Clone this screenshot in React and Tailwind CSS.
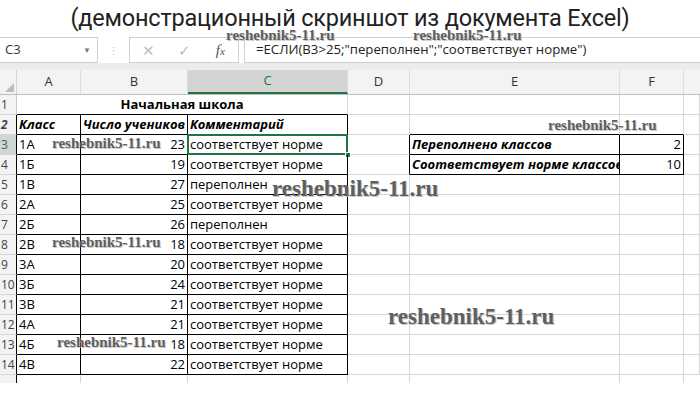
import React from "react";

const rows = [
  ["1А", 23, "соответствует норме"],
  ["1Б", 19, "соответствует норме"],
  ["1В", 27, "переполнен"],
  ["2А", 25, "соответствует норме"],
  ["2Б", 26, "переполнен"],
  ["2В", 18, "соответствует норме"],
  ["3А", 20, "соответствует норме"],
  ["3Б", 24, "соответствует норме"],
  ["3В", 21, "соответствует норме"],
  ["4А", 21, "соответствует норме"],
  ["4Б", 18, "соответствует норме"],
  ["4В", 22, "соответствует норме"],
];

const grid = "border-r border-b border-[#d6d6d6]";
const blk = "border-r border-b border-black";

const Watermark = ({ className }) => (
  <span
    className={"absolute font-bold text-[#5f5f5f] whitespace-nowrap leading-none pointer-events-none [text-shadow:1px_1px_0_#c8c8c8] " + className}
    style={{ fontFamily: '"Liberation Serif", serif' }}
  >
    reshebnik5-11.ru
  </span>
);

const RowHead = ({ n, black, sel }) => (
  <div
    className={
      "w-[17px] shrink-0 h-full flex items-center pl-[1px] text-[12px] border-b border-[#d6d6d6] " +
      (sel ? "bg-[#d4d4d4] text-[#217346] " : "bg-[#f3f3f3] text-[#444] ") +
      (black ? "border-r border-r-black" : "border-r border-r-[#c8c8c8]")
    }
  >
    {n}
  </div>
);

export default function App() {
  return (
    <div
      className="relative w-[700px] h-[417px] bg-white overflow-hidden text-black"
      style={{ fontFamily: '"Open Sans", "Noto Sans", sans-serif' }}
    >
      {/* title */}
      <div
        className="h-[37px] flex items-center justify-center text-[23.5px] text-[#222] tracking-[-0.2px]"
        style={{ fontFamily: "Roboto, sans-serif" }}
      >
        (демонстрационный скриншот из документа Excel)
      </div>

      {/* formula bar */}
      <div className="h-[33px] flex flex-col">
        <div className="h-[26px] flex items-stretch bg-white">
          <div className="w-[98px] border border-l-0 border-[#d0d0d0] flex items-center justify-between pl-[5px] pr-[6px] text-[13px] text-[#333]">
            <span>C3</span>
            <span className="text-[8px] text-[#777]">▼</span>
          </div>
          <div className="w-[31px] flex items-center justify-center text-[#bbb] text-[11px] leading-none">⋮</div>
          <div className="w-[110px] border border-[#d0d0d0] flex items-center text-[#bdbdbd]">
            <span className="w-[38px] text-center text-[15px]">✕</span>
            <span className="w-[36px] text-center text-[15px]">✓</span>
            <span
              className="w-[36px] text-center italic text-[15px] text-[#555]"
              style={{ fontFamily: '"Liberation Serif", serif' }}
            >
              f<span className="text-[11px]">x</span>
            </span>
          </div>
          <div className="w-[5px]" />
          <div className="flex-1 border border-r-0 border-[#d0d0d0] flex items-center pl-[11px] text-[13.2px] text-[#222]">
            =ЕСЛИ(B3&gt;25;"переполнен";"соответствует норме")
          </div>
        </div>
        <div className="flex-1 bg-[#ececec]" />
      </div>

      {/* column headers */}
      <div className="h-[25px] flex bg-[#f3f3f3] border-b border-[#c0c0c0] text-[13px] text-[#333]">
        <div className="w-[17px] shrink-0 border-r border-[#d6d6d6] relative">
          <span className="absolute right-[2px] bottom-[2px] w-0 h-0 border-l-[9px] border-l-transparent border-b-[9px] border-b-[#bdbdbd]" />
        </div>
        <div className="w-[64px] shrink-0 border-r border-[#dedede] flex items-center justify-center">A</div>
        <div className="w-[107px] shrink-0 border-r border-[#dedede] flex items-center justify-center">B</div>
        <div className="w-[160px] shrink-0 border-r border-[#dedede] flex items-center justify-center bg-[#d4d4d4] border-b-2 border-b-[#217346] text-[#217346]">C</div>
        <div className="w-[62px] shrink-0 border-r border-[#dedede] flex items-center justify-center">D</div>
        <div className="w-[210px] shrink-0 border-r border-[#dedede] flex items-center justify-center">E</div>
        <div className="w-[64px] shrink-0 border-r border-[#dedede] flex items-center justify-center">F</div>
        <div className="flex-1" />
      </div>

      {/* row 1 */}
      <div className="h-[20px] flex text-[13px]">
        <RowHead n={1} />
        <div className="w-[331px] shrink-0 border-b border-r border-b-black border-r-[#d6d6d6] flex items-center justify-center font-bold">
          Начальная школа
        </div>
        <div className={"w-[62px] shrink-0 " + grid} />
        <div className={"w-[210px] shrink-0 " + grid} />
        <div className={"w-[64px] shrink-0 " + grid} />
        <div className={"flex-1 " + grid} />
      </div>

      {/* row 2 */}
      <div className="h-[20px] flex text-[13px] font-bold italic">
        <RowHead n={2} black />
        <div className={"w-[64px] shrink-0 flex items-center pl-[2px] " + blk}>Класс</div>
        <div className={"w-[107px] shrink-0 flex items-center pl-[2px] whitespace-nowrap overflow-hidden " + blk}>Число учеников</div>
        <div className={"w-[160px] shrink-0 flex items-center pl-[2px] " + blk}>Комментарий</div>
        <div className={"w-[62px] shrink-0 " + grid} />
        <div className="w-[210px] shrink-0 border-r border-b border-r-[#d6d6d6] border-b-black" />
        <div className="w-[64px] shrink-0 border-r border-b border-r-[#d6d6d6] border-b-black" />
        <div className={"flex-1 " + grid} />
      </div>

      {/* rows 3-14 */}
      {rows.map(([cls, num, note], i) => {
        const n = i + 3;
        const side = n === 3 ? ["Переполнено классов", 2] : n === 4 ? ["Соответствует норме классов", 10] : null;
        return (
          <div key={n} className="h-[20px] flex text-[13px]">
            <RowHead n={n} black sel={n === 3} />
            <div className={"w-[64px] shrink-0 flex items-center pl-[2px] " + blk}>{cls}</div>
            <div className={"w-[107px] shrink-0 flex items-center justify-end pr-[2px] " + blk}>{num}</div>
            <div className={"relative w-[160px] shrink-0 flex items-center pl-[2px] whitespace-nowrap " + blk}>
              {note}
              {n === 3 && (
                <>
                  <span className="absolute -left-[1px] -top-[1px] -right-[1px] -bottom-[1px] border-2 border-[#217346]" />
                  <span className="absolute -right-[4px] -bottom-[4px] w-[6px] h-[6px] bg-[#217346] border border-white" />
                </>
              )}
            </div>
            {side ? (
              <>
                <div className="w-[62px] shrink-0 border-r border-b border-r-black border-b-[#d6d6d6]" />
                <div className={"w-[210px] shrink-0 flex items-center pl-[2px] font-bold italic whitespace-nowrap overflow-hidden " + blk}>{side[0]}</div>
                <div className={"w-[64px] shrink-0 flex items-center justify-end pr-[2px] " + blk}>{side[1]}</div>
              </>
            ) : (
              <>
                <div className={"w-[62px] shrink-0 " + grid} />
                <div className={"w-[210px] shrink-0 " + grid} />
                <div className={"w-[64px] shrink-0 " + grid} />
              </>
            )}
            <div className={"flex-1 " + grid} />
          </div>
        );
      })}

      {/* row 15, partly visible */}
      <div className="h-[8px] flex overflow-hidden">
        <div className="w-[17px] shrink-0 bg-[#f3f3f3] border-r border-black" />
        <div className="w-[64px] shrink-0 border-r border-[#d6d6d6]" />
        <div className="w-[107px] shrink-0 border-r border-[#d6d6d6]" />
        <div className="w-[160px] shrink-0 border-r border-[#d6d6d6]" />
        <div className="w-[62px] shrink-0 border-r border-[#d6d6d6]" />
        <div className="w-[210px] shrink-0 border-r border-[#d6d6d6]" />
        <div className="w-[64px] shrink-0 border-r border-[#d6d6d6]" />
      </div>

      {/* watermarks */}
      <Watermark className="left-[226px] top-[28px] text-[15px]" />
      <Watermark className="left-[413px] top-[28px] text-[15px]" />
      <Watermark className="left-[52px] top-[136px] text-[15px]" />
      <Watermark className="left-[548px] top-[118px] text-[15px]" />
      <Watermark className="left-[272px] top-[177px] text-[23px]" />
      <Watermark className="left-[52px] top-[235px] text-[15px]" />
      <Watermark className="left-[388px] top-[305px] text-[23px]" />
      <Watermark className="left-[57px] top-[335px] text-[15px]" />
    </div>
  );
}
